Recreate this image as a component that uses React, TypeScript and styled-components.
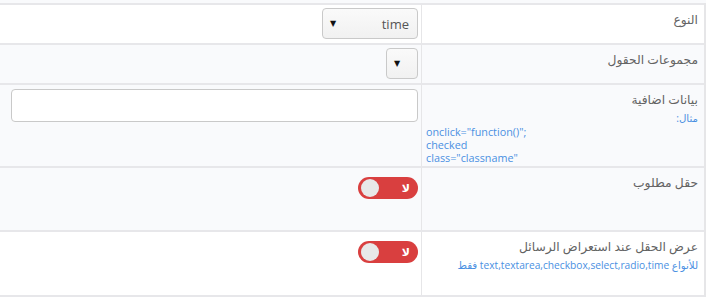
import React from "react";
import styled, { createGlobalStyle } from "styled-components";

const Global = createGlobalStyle`
  html, body { margin: 0; padding: 0; background: #ffffff; }
  body { font-family: "Open Sans", "DejaVu Sans", sans-serif; }
`;

const Page = styled.div`
  width: 707px;
  height: 299px;
  overflow: hidden;
  background: #ffffff;
`;

const PrevStub = styled.div`
  height: 3px;
  width: 706px;
  background: #f9fafc;
`;

const Table = styled.div`
  direction: rtl;
  width: 704px;
  border-right: 2px solid #e6e6e8;
  display: flex;
  flex-direction: column;
`;

const Row = styled.div<{ $h: number; $alt?: boolean }>`
  display: grid;
  grid-template-columns: 283px 1fr;
  box-sizing: border-box;
  height: ${(p) => p.$h}px;
  border-top: 2px solid #e7e7ea;
  background: ${(p) => (p.$alt ? "#f9fafc" : "#ffffff")};
`;

const LabelCell = styled.div`
  border-left: 1px solid #e6e6e8;
  padding: 6px 6px 0 4px;
  box-sizing: border-box;
`;

const Label = styled.div`
  font-size: 12.3px;
  line-height: 18px;
  color: #636363;
`;

const Hint = styled.div<{ $mt?: number }>`
  font-size: 10.2px;
  line-height: 13px;
  color: #4a90e2;
  margin-top: ${(p) => p.$mt ?? 0}px;
`;

const Code = styled.div`
  direction: ltr;
  text-align: left;
  font-size: 10.8px;
  line-height: 13px;
  color: #4a90e2;
  font-family: "Open Sans", "DejaVu Sans", sans-serif;
`;

const FieldCell = styled.div<{ $pt: number }>`
  padding: ${(p) => p.$pt}px 3px 0 11px;
  box-sizing: border-box;
  display: flex;
  align-items: flex-start;
`;

const Select = styled.div<{ $w: number }>`
  width: ${(p) => p.$w}px;
  height: 31px;
  box-sizing: border-box;
  border: 1px solid #c9c9c9;
  border-radius: 4px;
  background: linear-gradient(#fafafa, #f1f1f1);
  display: flex;
  align-items: center;
  justify-content: space-between;
  padding: 0 8px 0 7px;
  font-size: 13px;
  color: #555555;
`;

const Arrow = styled.span`
  font-size: 8px;
  color: #111;
  font-family: "DejaVu Sans", sans-serif;
`;

const TextInput = styled.div`
  width: 100%;
  height: 33px;
  box-sizing: border-box;
  border: 1px solid #c9c9c9;
  border-radius: 4px;
  background: #ffffff;
`;

const Toggle = styled.div`
  margin-top: 7px;
  width: 60px;
  height: 22px;
  border-radius: 11px;
  background: #d93f3f;
  display: flex;
  align-items: center;
  justify-content: space-between;
  padding: 0 8px 0 3px;
  box-sizing: border-box;
  direction: ltr;
`;

const Knob = styled.span`
  width: 18px;
  height: 18px;
  border-radius: 50%;
  background: #e8e8e8;
`;

const ToggleText = styled.span`
  color: #ffffff;
  font-size: 11px;
  font-weight: bold;
  font-family: "DejaVu Sans", sans-serif;
`;

function Switch() {
  return (
    <Toggle>
      <Knob />
      <ToggleText>لا</ToggleText>
    </Toggle>
  );
}

export default function App() {
  return (
    <Page>
      <Global />
      <PrevStub />
      <Table>
        <Row $h={40}>
          <LabelCell>
            <Label>النوع</Label>
          </LabelCell>
          <FieldCell $pt={3}>
            <Select $w={96}>
              <span>time</span>
              <Arrow>▼</Arrow>
            </Select>
          </FieldCell>
        </Row>
        <Row $h={40} $alt>
          <LabelCell>
            <Label>مجموعات الحقول</Label>
          </LabelCell>
          <FieldCell $pt={3}>
            <Select $w={32}>
              <span />
              <Arrow>▼</Arrow>
            </Select>
          </FieldCell>
        </Row>
        <Row $h={83} $alt>
          <LabelCell>
            <Label>بيانات اضافية</Label>
            <Hint $mt={3}>مثال:</Hint>
            <Code>onclick="function()";</Code>
            <Code>checked</Code>
            <Code>class="classname"</Code>
          </LabelCell>
          <FieldCell $pt={4}>
            <TextInput />
          </FieldCell>
        </Row>
        <Row $h={64} $alt>
          <LabelCell>
            <Label>حقل مطلوب</Label>
          </LabelCell>
          <FieldCell $pt={2}>
            <Switch />
          </FieldCell>
        </Row>
        <Row $h={65}>
          <LabelCell>
            <Label>عرض الحقل عند استعراض الرسائل</Label>
            <Hint $mt={3}>للأنواع text,textarea,checkbox,select,radio,time فقط</Hint>
          </LabelCell>
          <FieldCell $pt={2}>
            <Switch />
          </FieldCell>
        </Row>
        <Row $h={2} />
      </Table>
    </Page>
  );
}
